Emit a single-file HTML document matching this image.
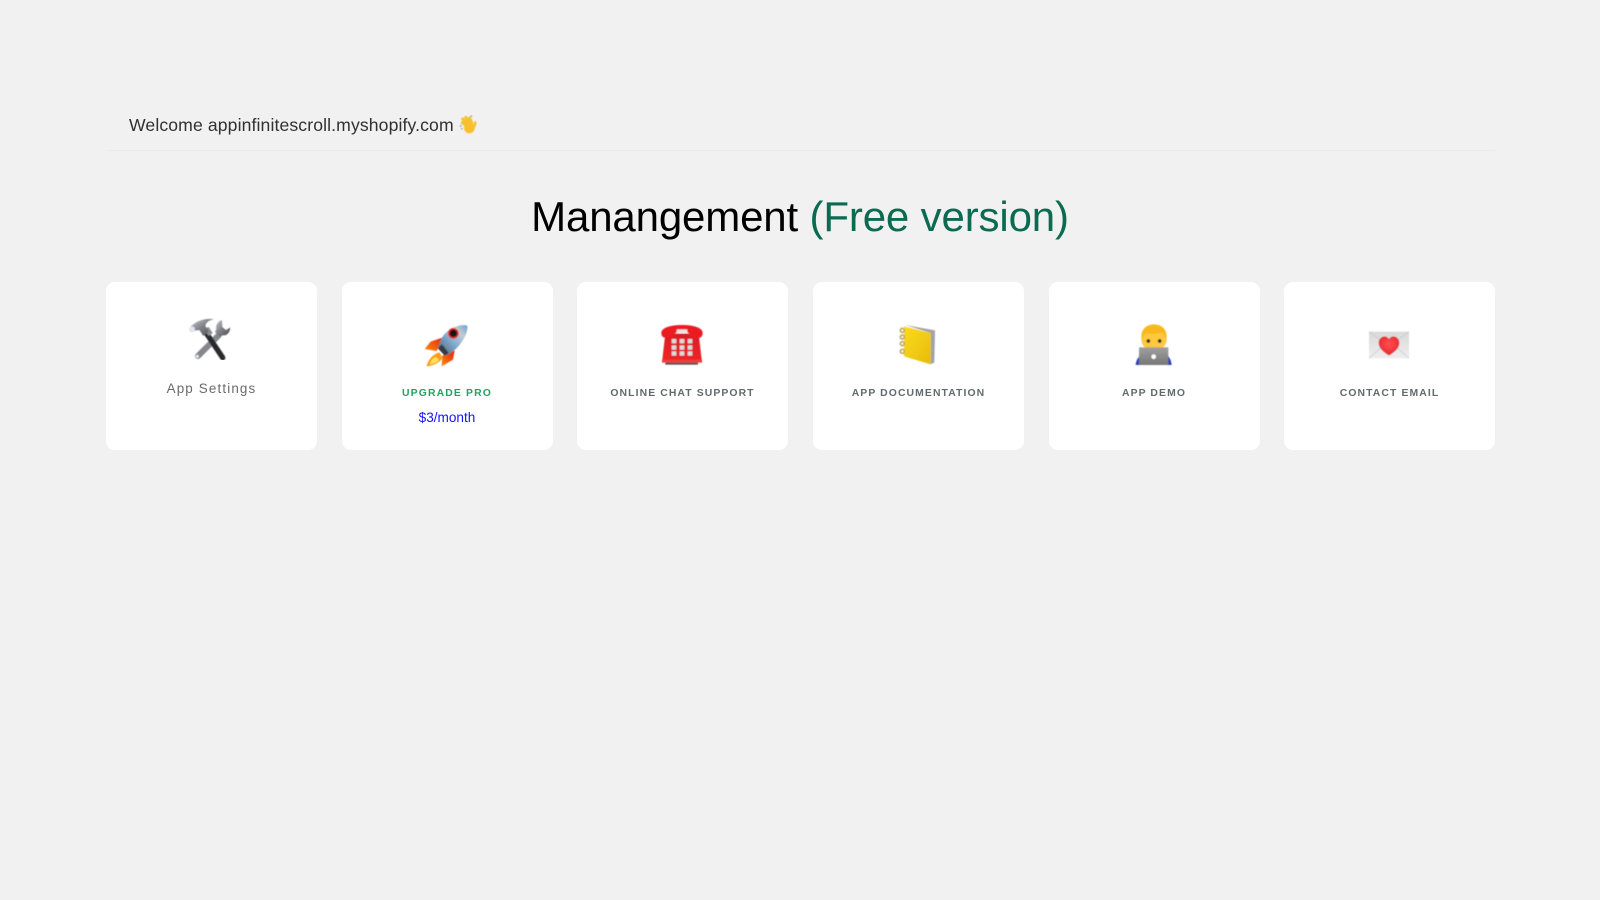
<!DOCTYPE html>
<html lang="en">
<head>
<meta charset="utf-8">
<title>Manangement</title>
<style>
html,body{margin:0;padding:0;width:1600px;height:900px;overflow:hidden;background:#f1f1f1;font-family:"Liberation Sans",sans-serif}
.abs{position:absolute}
.welcome{left:129px;top:114px;font-size:17.6px;line-height:22px;color:#303030;white-space:nowrap;letter-spacing:.12px}
.rule{left:106px;top:150px;width:1389px;height:1px;background:#ebebeb}
h1{position:absolute;left:0;top:190px;width:1600px;margin:0;text-align:center;font-weight:400;font-size:42px;line-height:54px;letter-spacing:-.15px;color:#000}
h1 span{color:#0b6b50}
.card{position:absolute;top:282px;width:211px;height:168px;background:#fff;border-radius:9px}
.label{position:absolute;left:0;width:100%;top:105px;text-align:center;font-size:10.4px;line-height:14px;font-weight:700;letter-spacing:1.1px;color:#616b6b;white-space:nowrap}
.icon{position:absolute;width:80px;height:60px}
</style>
</head>
<body>
<svg width="0" height="0" style="position:absolute">
<defs>
<linearGradient id="steel" x1="0" y1="0" x2="1" y2="1"><stop offset="0" stop-color="#c9ccd0"/><stop offset=".5" stop-color="#7d7f84"/><stop offset="1" stop-color="#4b4c50"/></linearGradient>
<linearGradient id="body" x1="0" y1="1" x2="1" y2="0"><stop offset="0" stop-color="#4d5a68"/><stop offset=".45" stop-color="#7fa8cc"/><stop offset=".75" stop-color="#c3ccd4"/><stop offset="1" stop-color="#6aa0cf"/></linearGradient>
<linearGradient id="red" x1="0" y1="0" x2="0" y2="1"><stop offset="0" stop-color="#d81f26"/><stop offset="1" stop-color="#ee2228"/></linearGradient>
<linearGradient id="yel" x1="0" y1="0" x2="1" y2="1"><stop offset="0" stop-color="#fbdc1c"/><stop offset="1" stop-color="#e8ba0c"/></linearGradient>
<linearGradient id="fin" x1="1" y1="0" x2="0" y2="1"><stop offset="0" stop-color="#e5200f"/><stop offset="1" stop-color="#fb8a12"/></linearGradient>
<linearGradient id="lap" x1="0" y1="0" x2="0" y2="1"><stop offset="0" stop-color="#a0a0a0"/><stop offset="1" stop-color="#767676"/></linearGradient>
<linearGradient id="env" x1="0" y1="0" x2="0" y2="1"><stop offset="0" stop-color="#d9d9d9"/><stop offset="1" stop-color="#eeeeee"/></linearGradient>
<radialGradient id="heart" cx=".5" cy=".4" r=".7"><stop offset="0" stop-color="#ff5050"/><stop offset="1" stop-color="#e0202a"/></radialGradient>
<filter id="soft" x="-5%" y="-5%" width="110%" height="110%"><feGaussianBlur stdDeviation="1.6"/></filter>
</defs>
</svg>

<div class="abs welcome">Welcome appinfinitescroll.myshopify.com</div>
<svg class="abs" style="left:458px;top:115px" width="20" height="20" viewBox="39 15 60 60">
<g filter="url(#soft)">
<path d="M44 50l6-5M48 58l5-4M76 16l5 5" stroke="#8f9aa8" stroke-width="3" fill="none"/>
<g stroke="#f7c02e" stroke-width="9" stroke-linecap="round">
<path d="M66 48L52 38M66 41L53 27M72 37L62 22M80 38L74 24M84 54L92 38"/>
</g>
<circle cx="73" cy="54" r="16" fill="#f7c02e"/>
</g>
</svg>
<div class="abs rule"></div>

<h1>Manangement <span>(Free version)</span></h1>

<div class="card" style="left:106px">
<div style="position:absolute;left:0;width:100%;top:98px;text-align:center;font-size:13.4px;line-height:18px;letter-spacing:1.15px;color:#6a6a6a;white-space:nowrap">App Settings</div>
</div>
<div class="card" style="left:341.5px">
<div class="label" style="color:#1ea560;letter-spacing:1.15px">UPGRADE PRO</div>
<div style="position:absolute;left:0;width:100%;top:127px;text-align:center;font-size:13.6px;line-height:18px;color:#1414ff">$3/month</div>
</div>
<div class="card" style="left:577px"><div class="label">ONLINE CHAT SUPPORT</div></div>
<div class="card" style="left:813px"><div class="label">APP DOCUMENTATION</div></div>
<div class="card" style="left:1048.5px"><div class="label">APP DEMO</div></div>
<div class="card" style="left:1284px"><div class="label">CONTACT EMAIL</div></div>

<!-- hammer and wrench -->
<svg class="icon" style="left:170px;top:310px" viewBox="0 0 240 180">
<g filter="url(#soft)">
<path d="M146 76L84 138" stroke="#85878c" stroke-width="18" stroke-linecap="round"/>
<circle cx="82" cy="139" r="4.5" fill="#eee"/>
<path d="M156 30c-12 4-20 15-17 27l-4 9 14 14 9-4c13 2 22-9 23-24l-13 8-11-9z" fill="url(#steel)"/>
<path d="M108 68L158 143" stroke="#2c2c2e" stroke-width="16" stroke-linecap="round"/>
<path d="M100 56l16 22 12-9-12-18z" fill="#8a8c90"/>
<path d="M60 52c14-16 42-30 72-24-16 2-24 10-26 20l10 16-16 14-12-18c-8 1-14 2-20 4z" fill="url(#steel)"/>
<circle cx="66" cy="58" r="9" fill="#dfe6ee"/>
</g>
</svg>

<!-- rocket -->
<svg class="icon" style="left:410px;top:315px" viewBox="0 0 240 180">
<g filter="url(#soft)">
<path d="M102 66L62 80 44 102l36 6z" fill="url(#fin)"/>
<path d="M134 106l-5 28-34 20 2-32z" fill="url(#fin)"/>
<path d="M88 112c-16 4-34 20-38 42 14-1 38-8 48-26z" fill="#fa9c16"/>
<path d="M78 126c-9 3-16 11-19 22 9-1 22-5 28-13z" fill="#ffe15a"/>
<path d="M172 32c-22-6-54 6-72 30-8 11-14 28-16 38l20 22c14-4 32-16 46-34 16-20 24-40 22-56z" fill="url(#body)"/>
<path d="M84 100l20 22 12-8-20-26z" fill="#363b44"/>
<circle cx="130" cy="55" r="16" fill="#e42a2a"/>
<circle cx="130" cy="55" r="11" fill="#151518"/>
</g>
</svg>

<!-- telephone -->
<svg class="icon" style="left:640px;top:315px" viewBox="0 0 240 180">
<g filter="url(#soft)">
<path d="M76 56h100l10 86H66z" fill="url(#red)"/>
<path d="M66 134h120v9H66z" fill="#f23a3a"/>
<path d="M76 143h98v6H76z" fill="#5a4a4a"/>
<path d="M64 54c0-16 28-24 62-24s62 8 62 24c0 8-4 14-10 14h-30V55c-8-4-8-5-22-5s-14 1-22 5v13H76c-8 0-12-6-12-14z" fill="#ea1c22"/>
<rect x="110" y="43" width="32" height="10" fill="#f0dede"/>
<g fill="#dcdcdc">
<rect x="95" y="72" width="14" height="13"/><rect x="119" y="72" width="14" height="13"/><rect x="143" y="72" width="14" height="13"/>
<rect x="95" y="91" width="14" height="13"/><rect x="119" y="91" width="14" height="13"/><rect x="143" y="91" width="14" height="13"/>
<rect x="95" y="109" width="14" height="13"/><rect x="119" y="109" width="14" height="13"/><rect x="143" y="109" width="14" height="13"/>
</g>
</g>
</svg>

<!-- notebook -->
<svg class="icon" style="left:880px;top:315px" viewBox="0 0 240 180">
<g filter="url(#soft)">
<path d="M76 30l89 16-2 96-11 6V54z" fill="#a3a3a3"/>
<path d="M72 34l80 20v94l-80-24z" fill="url(#yel)"/>
<g fill="none" stroke="#bfa964" stroke-width="5">
<circle cx="67" cy="46" r="6"/><circle cx="67" cy="66" r="6"/><circle cx="67" cy="86" r="6"/><circle cx="67" cy="109" r="6"/>
</g>
</g>
</svg>

<!-- technologist -->
<svg class="icon" style="left:1115px;top:315px" viewBox="0 0 240 180">
<g filter="url(#soft)">
<path d="M62 150c1-12 6-22 14-28h82c6 6 11 16 12 28z" fill="#2b3fbd"/>
<path d="M79 72c0-26 16-43 38-43s38 17 38 43c0 20-16 36-38 36S79 92 79 72z" fill="#ffc83d"/>
<path d="M80 72c-5-28 14-44 37-44s42 16 37 44c-4-10-8-16-14-20-12 5-34 6-46 2-6 4-10 10-14 18z" fill="#f8b91c"/>
<circle cx="100" cy="78" r="5.5" fill="#3a2a1a"/><circle cx="134" cy="78" r="5.5" fill="#3a2a1a"/>
<rect x="72" y="97" width="88" height="53" fill="url(#lap)"/>
<circle cx="116" cy="125" r="7" fill="#fff"/>
</g>
</svg>

<!-- love letter -->
<svg class="icon" style="left:1350px;top:315px" viewBox="0 0 240 180">
<g filter="url(#soft)">
<rect x="57" y="50" width="120" height="80" fill="url(#env)"/>
<path d="M57 50l60 44 60-44M57 130l44-40M177 130l-44-40" fill="none" stroke="#c6c6c6" stroke-width="2"/>
<path d="M117 122c-18-12-31-22-31-39 0-11 9-19 18-19 5 0 10 3 13 8 3-5 8-8 13-8 9 0 18 8 18 19 0 17-13 27-31 39z" fill="url(#heart)"/>
</g>
</svg>
</body>
</html>
